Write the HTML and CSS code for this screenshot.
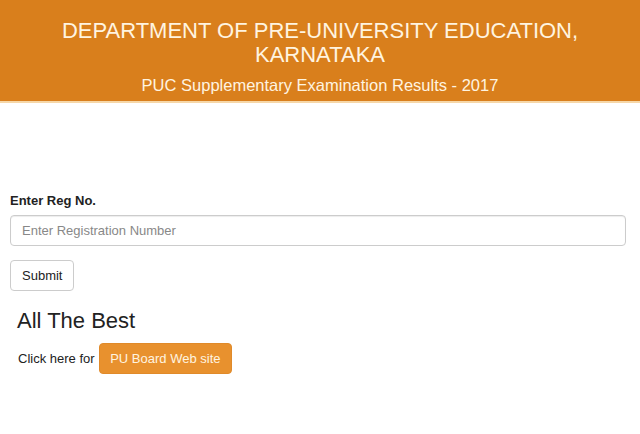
FILE: index.html
```html
<!DOCTYPE html>
<html lang="en">
<head>
    <meta charset="UTF-8">
    <meta name="viewport" content="width=device-width, initial-scale=1.0">
    <title>PUC Supplementary Examination Results - 2017</title>
    <link rel="stylesheet" href="styles.css">
</head>
<body>
    <div class="header">
        <h1>DEPARTMENT OF PRE-UNIVERSITY EDUCATION,<br>KARNATAKA</h1>
        <h2>PUC Supplementary Examination Results - 2017</h2>
    </div>

    <div class="content">
        <form class="result-form">
            <label for="regNo">Enter Reg No.</label>
            <input type="text" id="regNo" placeholder="Enter Registration Number">
            <button type="button" class="btn">Submit</button>
        </form>

        <h3 class="wish">All The Best</h3>
        <p class="board-link">Click here for <a href="#" class="btn btn-orange">PU Board Web site</a></p>
    </div>
</body>
</html>
```

FILE: styles.css
```css
body {
    margin: 0;
    font-family: "Liberation Sans", Arial, sans-serif;
    color: #222;
    background-color: #fff;
}
.header {
    background-color: #d97f1c;
    color: #fff4e0;
    text-align: center;
    padding: 19px 10px 0;
    height: 82px;
    border-bottom: 2px solid #f6d7a8;
}
.header h1 {
    margin: 0;
    font-size: 22px;
    font-weight: normal;
    line-height: 24px;
}
.header h2 {
    margin: 8px 0 0;
    font-size: 16.5px;
    font-weight: normal;
    line-height: 20px;
}
.content {
    padding: 90px 14px 0 10px;
}
.result-form label {
    display: block;
    font-size: 13px;
    font-weight: bold;
    line-height: 15px;
    margin-bottom: 7px;
}
.result-form input {
    display: block;
    box-sizing: border-box;
    width: 100%;
    height: 31px;
    padding: 6px 11px;
    font-family: inherit;
    font-size: 13px;
    color: #555;
    border: 1px solid #ccc;
    border-radius: 4px;
    box-shadow: inset 0 1px 1px rgba(0, 0, 0, 0.075);
}
.result-form input::placeholder {
    color: #888;
}
.btn {
    display: inline-block;
    box-sizing: border-box;
    height: 31px;
    padding: 7px 11px;
    font-family: inherit;
    font-size: 13px;
    line-height: 15px;
    color: #222;
    background-color: #fff;
    border: 1px solid #ccc;
    border-radius: 4px;
    text-decoration: none;
    cursor: pointer;
}
.result-form .btn {
    margin-top: 14px;
}
.wish {
    margin: 18px 0 0 7px;
    font-size: 22px;
    font-weight: normal;
    line-height: 24px;
}
.board-link {
    margin: 10px 0 0 8px;
    font-size: 13px;
}
.btn-orange {
    margin-left: 1px;
    padding: 7px 10px;
    color: #fff4e0;
    background-color: #e8912e;
    border-color: #e08a2a;
}
```
